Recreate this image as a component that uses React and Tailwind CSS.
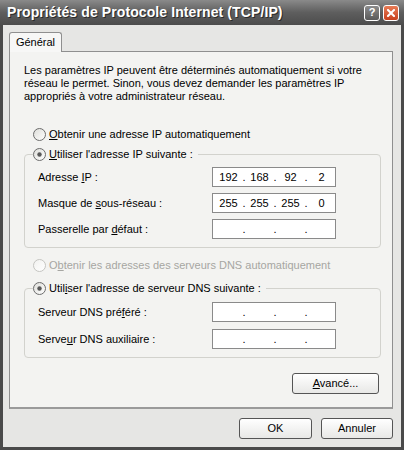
import { Fragment } from "react";

function Radio({ checked, disabled }) {
    const id = disabled ? "rg-off" : "rg-on";
    return (
        <svg width="13" height="13" viewBox="0 0 13 13" className="shrink-0">
            <defs>
                <linearGradient id={id} x1="0" y1="0" x2="1" y2="1">
                    <stop offset="0" stopColor={disabled ? "#f1f1ef" : "#dcdcd8"} />
                    <stop offset="1" stopColor="#ffffff" />
                </linearGradient>
            </defs>
            <circle cx="6.5" cy="6.5" r="6" fill={`url(#${id})`} stroke={disabled ? "#c4c4c0" : "#6c6c6c"} />
            {checked && <circle cx="6.5" cy="6.5" r="2.2" fill="#585858" />}
        </svg>
    );
}

function IpField({ parts = ["", "", "", ""] }) {
    return (
        <div className="flex h-[20px] w-[124px] items-center border border-[#8a8a8a] bg-white pl-[2px] leading-none">
            {parts.map((p, i) => (
                <Fragment key={i}>
                    {i > 0 && <span className="w-[4px] text-center">.</span>}
                    <span className="w-[27px] text-center">{p}</span>
                </Fragment>
            ))}
        </div>
    );
}

function Row({ children, parts, className = "" }) {
    return (
        <div className={"flex h-[20px] items-center pl-[13px] " + className}>
            <span className="w-[174px]">{children}</span>
            <IpField parts={parts} />
        </div>
    );
}

function XpButton({ children, w }) {
    return (
        <button
            type="button"
            className={`flex h-[21px] items-center justify-center rounded-[3px] border border-[#555] bg-gradient-to-b from-white to-[#e8e8e6] ${w}`}
        >
            {children}
        </button>
    );
}

function App() {
    return (
        <div className="flex h-[450px] w-[404px] flex-col font-['Liberation_Sans',Arial,sans-serif] text-[11px] text-black">
            {/* title bar */}
            <div className="flex h-[25px] items-center bg-gradient-to-b from-[#8a8a8a] via-[#5e5e5e] to-[#4c4c4c] pl-[7px] pr-[5px]">
                <span className="flex-1 text-[14px] font-bold tracking-[0.1px] text-white [text-shadow:1px_1px_0_#2a2a2a]">
                    Propriétés de Protocole Internet (TCP/IP)
                </span>
                <div className="flex gap-[3px]">
                    <div className="flex h-[16px] w-[16px] items-center justify-center rounded-[3px] border border-white bg-gradient-to-b from-[#8c8c8c] to-[#5a5a5a] text-[11px] font-bold text-white">
                        ?
                    </div>
                    <div className="flex h-[16px] w-[16px] items-center justify-center rounded-[3px] border border-white bg-gradient-to-b from-[#e77b55] to-[#c8401c]">
                        <svg width="8" height="8" viewBox="0 0 8 8">
                            <path d="M1 1L7 7M7 1L1 7" stroke="white" strokeWidth="2" strokeLinecap="square" />
                        </svg>
                    </div>
                </div>
            </div>

            {/* body */}
            <div className="flex flex-1 flex-col border-x-[3px] border-b-[3px] border-[#4a4a4a] bg-[#e6e6e4] pt-[7px] pl-[6px] pr-[8px]">
                <div className="relative z-10 -mb-px flex h-[20px] w-[53px] items-center justify-center rounded-t-[3px] border border-b-0 border-[#8f8f8f] bg-[#f7f7f6]">
                    Général
                </div>
                <div className="flex h-[358px] flex-col border border-b-2 border-[#8f8f8f] border-b-[#9a9a9a] bg-[#f3f3f1] pl-[14px]">
                    <p className="mt-[12px] leading-[13px]">
                        Les paramètres IP peuvent être déterminés automatiquement si votre
                        <br />
                        réseau le permet. Sinon, vous devez demander les paramètres IP
                        <br />
                        appropriés à votre administrateur réseau.
                    </p>

                    <div className="mt-[25px] flex h-[13px] items-center gap-[3px] pl-[9px]">
                        <Radio />
                        <span>
                            <u>O</u>btenir une adresse IP automatiquement
                        </span>
                    </div>

                    <fieldset className="mt-[7px] w-[357px] rounded-[4px] border border-[#d2d2cd] pb-[8px]">
                        <legend className="ml-[8px] flex h-[13px] items-center gap-[3px] pr-[5px]">
                            <Radio checked />
                            <span>
                                <u>U</u>tiliser l'adresse IP suivante :
                            </span>
                        </legend>
                        <div className="mt-[6px] flex flex-col gap-[6px]">
                            <Row parts={["192", "168", "92", "2"]}>
                                Adresse <u>I</u>P :
                            </Row>
                            <Row parts={["255", "255", "255", "0"]}>
                                Masque de <u>s</u>ous-réseau :
                            </Row>
                            <Row>
                                Passerelle par <u>d</u>éfaut :
                            </Row>
                        </div>
                    </fieldset>

                    <div className="mt-[11px] flex h-[13px] items-center gap-[3px] pl-[9px] text-[#a6a6a2]">
                        <Radio disabled />
                        <span>
                            O<u>b</u>tenir les adresses des serveurs DNS automatiquement
                        </span>
                    </div>

                    <fieldset className="mt-[10px] w-[357px] rounded-[4px] border border-[#d2d2cd] pb-[8px]">
                        <legend className="ml-[8px] flex h-[13px] items-center gap-[3px] pr-[5px]">
                            <Radio checked />
                            <span>
                                Util<u>i</u>ser l'adresse de serveur DNS suivante :
                            </span>
                        </legend>
                        <div className="mt-[7px] flex flex-col gap-[7px]">
                            <Row>
                                Serveur DNS pré<u>f</u>éré :
                            </Row>
                            <Row>
                                Serve<u>u</u>r DNS auxiliaire :
                            </Row>
                        </div>
                    </fieldset>

                    <div className="mt-[15px] flex justify-end pr-[13px]">
                        <XpButton w="w-[87px]">
                            <span>
                                <u>A</u>vancé...
                            </span>
                        </XpButton>
                    </div>
                </div>

                <div className="mt-[9px] flex justify-end gap-[9px]">
                    <XpButton w="w-[73px]">OK</XpButton>
                    <XpButton w="w-[72px]">Annuler</XpButton>
                </div>
            </div>
        </div>
    );
}

export default App;
